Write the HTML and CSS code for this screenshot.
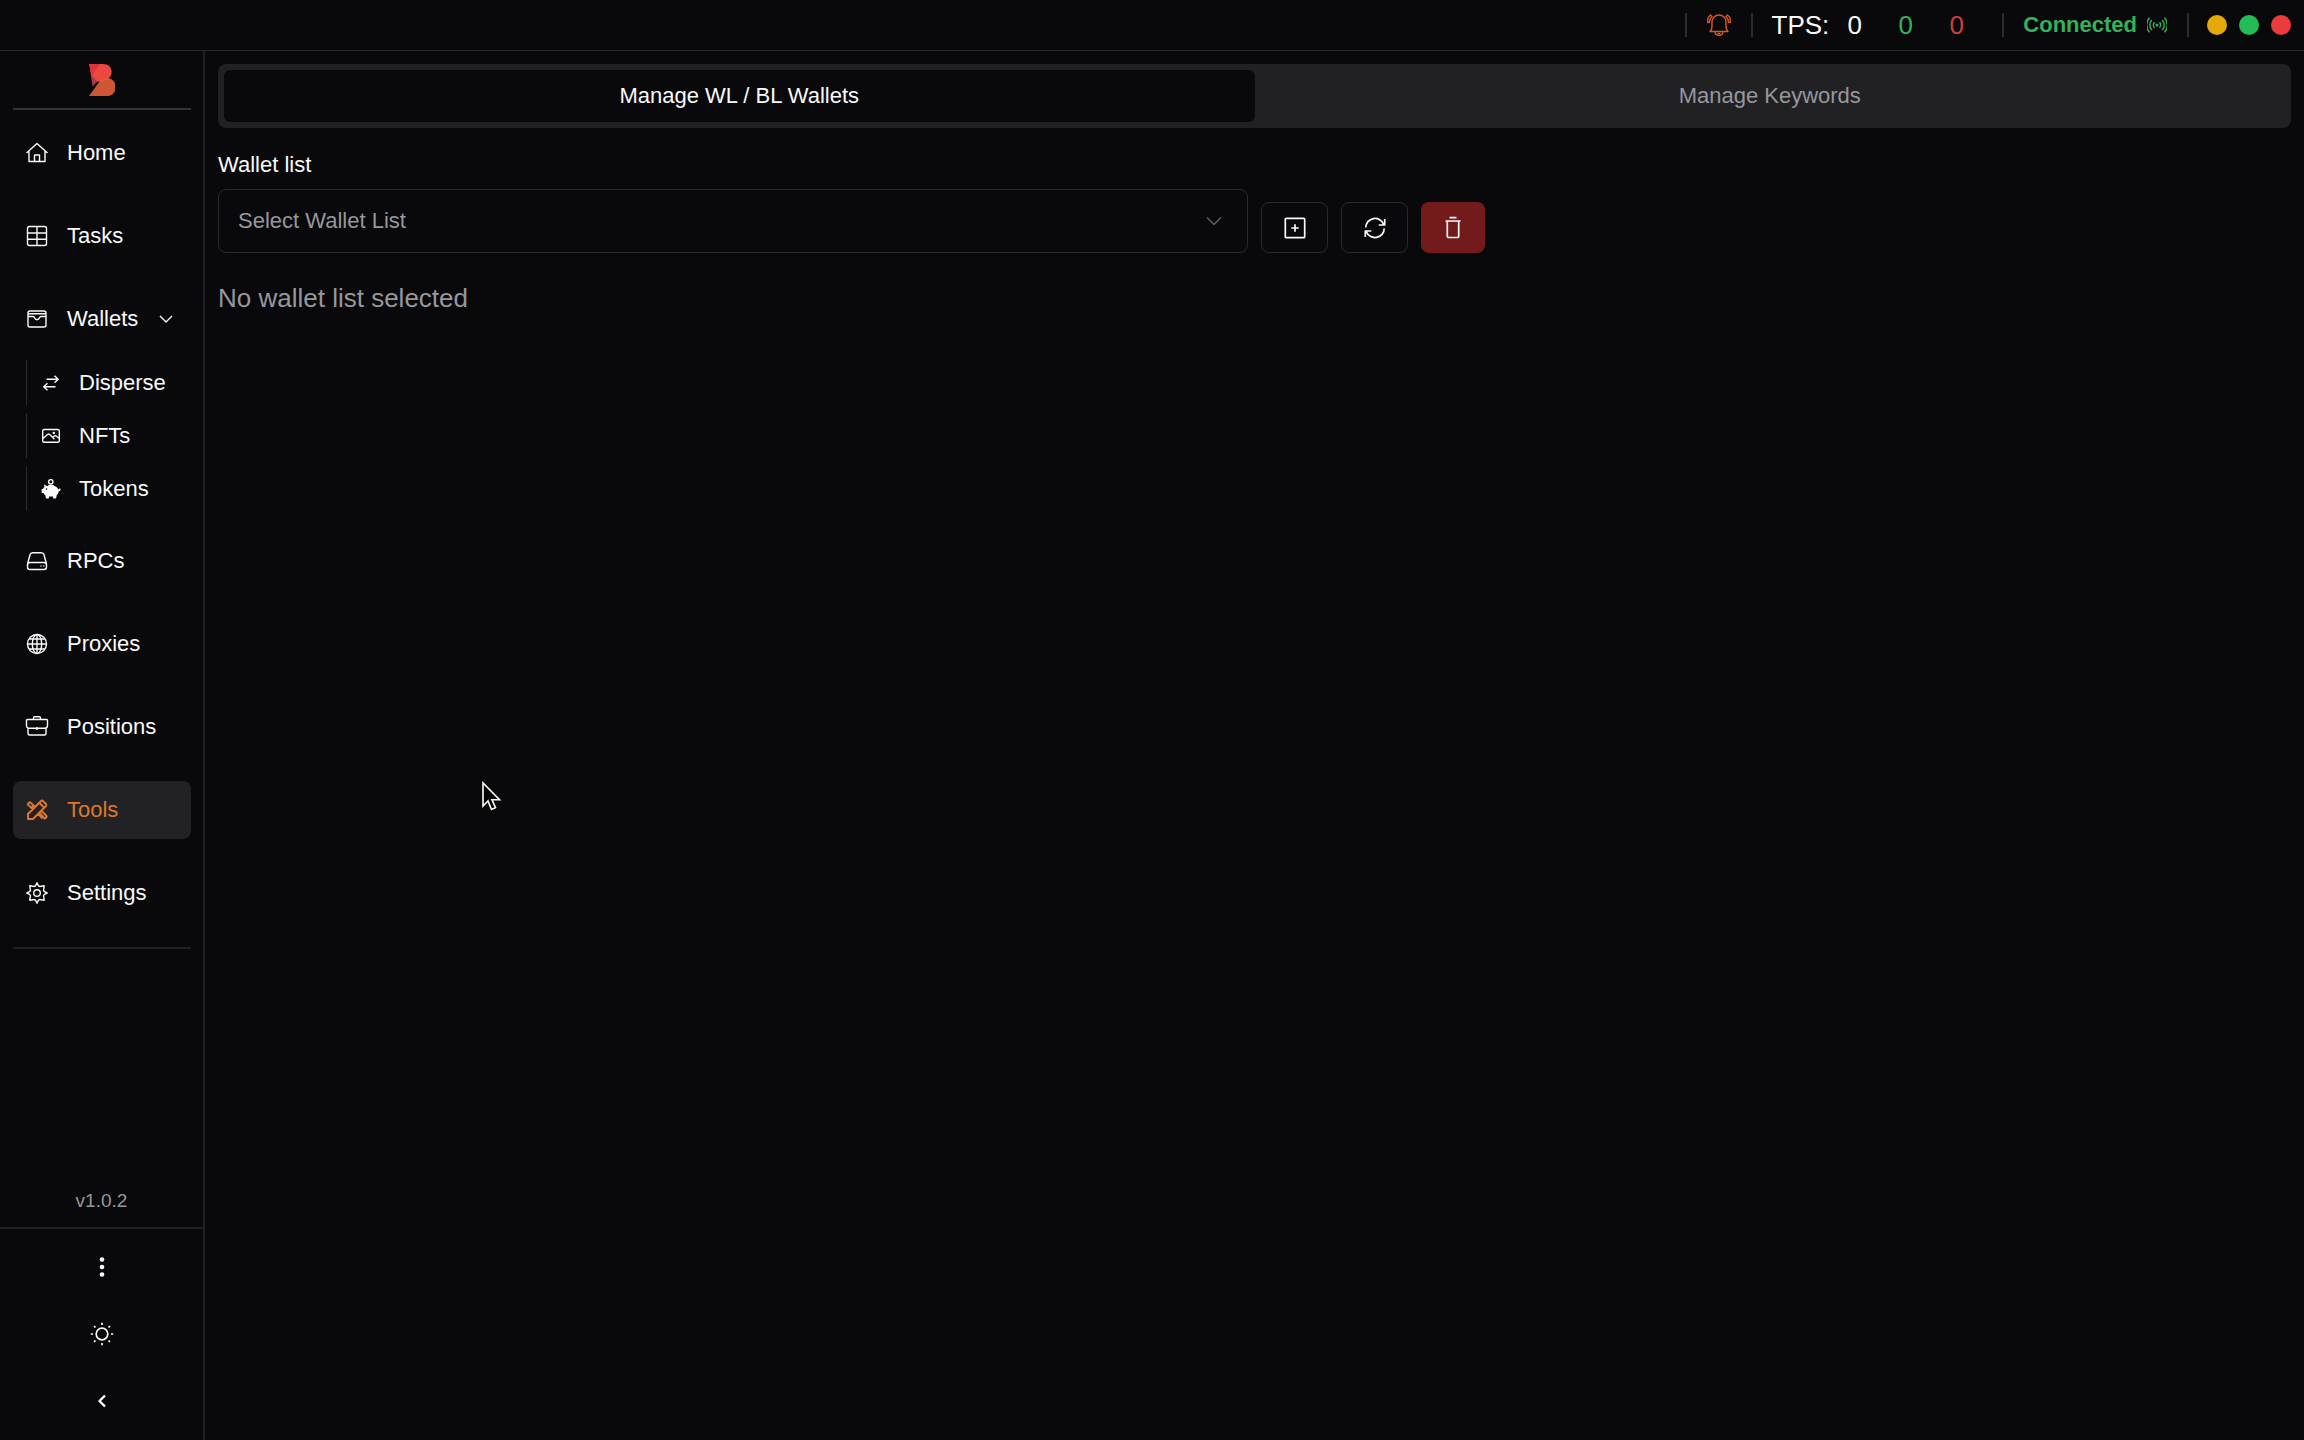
FILE: index.html
```html
<!DOCTYPE html>
<html lang="en">
<head>
<meta charset="utf-8">
<meta name="viewport" content="width=device-width, initial-scale=1">
<title>Tools</title>
<link rel="stylesheet" href="styles.css">
</head>
<body>
<header class="topbar">
  <div class="topbar-cell">
    <button class="icon-button alert" type="button" aria-label="Notifications">
      <svg class="icon" viewBox="0 0 24 24"><path d="M3 18.500c1.700-1.300 2-3.200 2-5.700V9a7 7 0 0 1 14 0v3.800c0 2.500.3 4.400 2 5.700z"/><path d="M8 18.500c.3 5.300 7.700 5.300 8 0M10.500 20.500h3M3.500 2C1.300 3.600.4 6 .5 9.500l2-.3c.1-2.500.9-4.300 2.500-5.700zM20.500 2c2.200 1.600 3.100 4 3 7.500l-2-.3c-.1-2.500-.9-4.300-2.500-5.700z"/></svg>
    </button>
  </div>
  <div class="topbar-cell tps">
    <span class="tps-label">TPS:</span>
    <span class="tps-value">0</span>
    <span class="tps-value good">0</span>
    <span class="tps-value bad">0</span>
  </div>
  <div class="topbar-cell connection">
    <span>Connected</span>
    <svg class="icon icon-small" viewBox="0 0 20 20"><circle cx="10" cy="10" r=".8"/><path d="M7.500 7.300a4.200 4.200 0 0 0 0 5.400M12.500 7.300a4.200 4.200 0 0 1 0 5.400M4.800 4.900a7.500 7.500 0 0 0 0 10.200M15.200 4.900a7.500 7.500 0 0 1 0 10.200M2.500 2.800a10.500 10.500 0 0 0 0 14.400M17.500 2.800a10.500 10.500 0 0 1 0 14.400"/></svg>
  </div>
  <div class="topbar-cell window-controls">
    <button class="dot dot-amber" type="button" aria-label="Minimize"></button>
    <button class="dot dot-green" type="button" aria-label="Maximize"></button>
    <button class="dot dot-red" type="button" aria-label="Close"></button>
  </div>
</header>

<div class="shell">
  <aside class="sidebar">
    <a class="logo" href="#" aria-label="Dashboard">
      <svg viewBox="0 0 80 96"><path fill="#a73b43" d="M3 18h28v26L11 68z"/><path fill="#ee4640" d="M0 0h42c16 0 26 9 26 24 0 11-6 18-14 21-12-1-20 3-28 9L9 36z"/><path fill="#dc3534" d="M0 0h32L12 30l-4 4z"/><path fill="#cc5732" d="M0 96l31-43c5-8 13-11 22-11 16 0 27 11 27 27S69 96 53 96z"/><path fill="#ef5a35" d="M27 54c8-10 21-13 33-11-5 7-20 8-33 11z"/></svg>
    </a>
    <nav class="nav">
      <a class="nav-item" href="#">
        <svg class="icon" viewBox="0 0 24 24"><path d="M1.500 12 12 2.500 22.500 12M4 10v10.500h16V10M9.500 20.500V14h5v6.500"/></svg>
        <span>Home</span>
      </a>
      <a class="nav-item" href="#">
        <svg class="icon" viewBox="0 0 24 24"><rect x="2.500" y="2.500" width="19" height="19" rx="2"/><path d="M2.500 9h19M2.500 15.200h19M12 2.500v19"/></svg>
        <span>Tasks</span>
      </a>
      <button class="nav-item" type="button" aria-expanded="true">
        <svg class="icon" viewBox="0 0 24 24"><rect x="3" y="4" width="18" height="16" rx="2"/><path d="M3 6.800h18M3 9.500h5.200c.8 0 1 .6 1.300 1.300.9 2.500 4.100 2.500 5 0 .3-.7.500-1.300 1.300-1.300H21"/></svg>
        <span>Wallets</span>
        <svg class="icon chevron" viewBox="0 0 16 16"><path d="m2 5 6 6 6-6"/></svg>
      </button>
      <ul class="subnav">
        <li><a class="subnav-item" href="#">
          <svg class="icon icon-small" viewBox="0 0 20 20"><path d="M5.500 6.200H17M13.500 2.700 17.300 6.200 13.500 9.700M14.500 13.700H3M6.500 10.200 2.700 13.700l3.800 3.500"/></svg>
          <span>Disperse</span>
        </a></li>
        <li><a class="subnav-item" href="#">
          <svg class="icon icon-small" viewBox="0 0 20 20"><rect x="1.700" y="3.500" width="16.600" height="12.800" rx="1.500"/><path d="m2 12.500 4.500-4c1-.8 1.800-.4 2.500.3l4.500 4.500M11.500 11.500 13 10.300c1-.8 1.800-.6 2.500 0l2.500 2"/><circle cx="12.800" cy="7" r=".6"/></svg>
          <span>NFTs</span>
        </a></li>
        <li><a class="subnav-item" href="#">
          <svg class="icon icon-small" viewBox="0 0 20 20"><circle cx="9.800" cy="2.800" r="2.200"/><path d="M7 7q3-1 6 0"/><path fill="currentColor" stroke="none" fill-rule="evenodd" d="M3 5.300 6 7.200c1-.4 2.300-.6 3.800-.6 3.700 0 6.700 1.500 7.700 3.900.9.100.8-1.100 1.300-1.300.8 0 1 .9.700 1.800-.3.800-.9 1.200-1.700 1.300-.1 1.600-.9 2.700-2 3.700L15 19.500h-2.700l-.6-1.900H8.300l-.6 1.900H5l-.7-3.300c-.8-.6-1.400-1.300-1.800-2.200H.6V10h1.300c.4-.9.900-1.600 1.600-2.100zM5.500 9.200a.8.800 0 1 0 0 1.600.8.800 0 0 0 0-1.600z"/></svg>
          <span>Tokens</span>
        </a></li>
      </ul>
      <a class="nav-item" href="#">
        <svg class="icon" viewBox="0 0 24 24"><path d="M2.500 15 5 5.700C5.400 4.200 6.400 3.700 7.700 3.700h8.600c1.300 0 2.300.5 2.700 2l2.500 9.300"/><rect x="2.500" y="13.500" width="19" height="7" rx="2.500"/><path d="M15.500 17h1M18.300 17h1"/></svg>
        <span>RPCs</span>
      </a>
      <a class="nav-item" href="#">
        <svg class="icon" viewBox="0 0 24 24"><circle cx="12" cy="12" r="9.500"/><ellipse cx="12" cy="12" rx="4.700" ry="9.500"/><path d="M2.500 12h19M12 2.500v19M4.300 7h15.400M4.300 17h15.400"/></svg>
        <span>Proxies</span>
      </a>
      <a class="nav-item" href="#">
        <svg class="icon" viewBox="0 0 24 24"><path d="M2.300 4.500h19.400c.6 0 .8.300.8.800v5.200c0 1.700-1 2.800-2.700 2.800H4.200c-1.700 0-2.700-1.100-2.700-2.800V5.300c0-.5.200-.8.800-.8zM3 13v5.500c0 1 .6 1.500 1.500 1.500h15c.9 0 1.500-.5 1.500-1.500V13M8.500 4.500V3c0-.8.400-1.200 1.200-1.200h4.600c.8 0 1.200.4 1.200 1.200v1.500M12 12v3"/></svg>
        <span>Positions</span>
      </a>
      <a class="nav-item active" href="#" aria-current="page">
        <svg class="icon" viewBox="0 0 24 24"><path d="M3 21v-5L15.800 3.200c.7-.7 1.700-.7 2.400 0l2.600 2.600c.7.700.7 1.700 0 2.400L8 21zM10 9 5.600 4.600c-.5-.5-1-.5-1.500 0L3.300 5.400c-.5.500-.5 1 0 1.500L8 11.500M6.500 9.500l2-2M15 15.500l4 4.500c.5.500 1 .5 1.500 0l.8-.8c.5-.5.500-1 0-1.500L16.500 13M12.500 15l5 5.500M14.500 5l4.500 4.500"/></svg>
        <span>Tools</span>
      </a>
      <a class="nav-item" href="#">
        <svg class="icon" viewBox="0 0 24 24"><circle cx="12" cy="12" r="3.300"/><path d="M12 1.800 13.300 4.500C14 5.400 15.200 5.700 16.200 5.200L19.200 4.800 18.800 7.800C18.300 8.800 18.600 10 19.500 10.700L22.200 12 19.500 13.300C18.600 14 18.300 15.200 18.800 16.200L19.200 19.200 16.200 18.800C15.200 18.300 14 18.600 13.300 19.500L12 22.200 10.700 19.500C10 18.600 8.800 18.300 7.800 18.800L4.800 19.200 5.200 16.200C5.700 15.200 5.400 14 4.500 13.300L1.800 12 4.500 10.700C5.400 10 5.700 8.800 5.200 7.800L4.800 4.800 7.800 5.200C8.800 5.700 10 5.400 10.700 4.500z"/></svg>
        <span>Settings</span>
      </a>
    </nav>
    <div class="sidebar-foot">
      <p class="version">v1.0.2</p>
      <div class="foot-actions">
        <button class="icon-button" type="button" aria-label="More">
          <svg class="icon" viewBox="0 0 24 24"><g fill="currentColor" stroke="none"><circle cx="12" cy="4.500" r="2.300"/><circle cx="12" cy="12" r="2.300"/><circle cx="12" cy="19.500" r="2.300"/></g></svg>
        </button>
        <button class="icon-button" type="button" aria-label="Toggle theme">
          <svg class="icon icon-bold" viewBox="0 0 24 24"><circle cx="12" cy="12" r="5.800"/><path d="M12 .8v2.200M12 21v2.200M.8 12H3M21 12h2.200M4 4l1.500 1.500M18.500 18.500 20 20M4 20l1.500-1.500M18.500 5.500 20 4"/></svg>
        </button>
        <button class="icon-button" type="button" aria-label="Collapse sidebar">
          <svg class="icon icon-heavy" viewBox="0 0 24 24"><path d="m15 6.500-5.500 5.500 5.500 5.500"/></svg>
        </button>
      </div>
    </div>
  </aside>

  <main class="content">
    <div class="tabs" role="tablist">
      <button class="tab selected" type="button" role="tab" aria-selected="true">Manage WL / BL Wallets</button>
      <button class="tab" type="button" role="tab" aria-selected="false">Manage Keywords</button>
    </div>
    <form class="picker">
      <div class="field">
        <label for="wallet-list">Wallet list</label>
        <div class="select-wrap">
          <select id="wallet-list"><option>Select Wallet List</option></select>
          <svg class="icon icon-bold select-arrow" viewBox="0 0 20 20"><path d="m3 6.500 7 7 7-7"/></svg>
        </div>
      </div>
      <div class="actions">
        <button class="action" type="button" aria-label="Add wallet list">
          <svg class="icon icon-bold" viewBox="0 0 24 24"><rect x="2.300" y="2.300" width="19.400" height="19.400" rx="1"/><path d="M12 8.300v7.400M8.300 12h7.400"/></svg>
        </button>
        <button class="action" type="button" aria-label="Refresh">
          <svg class="icon icon-bold" viewBox="0 0 24 24"><path d="M2.800 11.500A9.200 9 0 0 1 20.700 8.500M21.700 3v6h-6M21.200 12.500A9.200 9 0 0 1 3.300 15.500M2.300 21v-6h6"/></svg>
        </button>
        <button class="action danger" type="button" aria-label="Delete">
          <svg class="icon icon-bold" viewBox="0 0 24 24"><path d="M4.500 5h15M8.500 1.700h7M6.300 5v15.300c0 .8.400 1.200 1.200 1.200h9c.8 0 1.200-.4 1.200-1.200V5"/></svg>
        </button>
      </div>
    </form>
    <p class="empty">No wallet list selected</p>
  </main>
</div>

<svg class="pointer" viewBox="0 0 20 30" aria-hidden="true"><path d="M1 2v23l5-5 3.500 8.500 4-1.800-3.500-8H17.500z"/></svg>
</body>
</html>
```

FILE: styles.css
```css
:root {
  --bg: #09090b;
  --line: #202022;
  --surface: #212123;
  --text: #fafafa;
  --muted: #97979e;
  --green: #32b35b;
  --red: #d23c3a;
  --orange: #dd7631;
}

* { box-sizing: border-box; }

body {
  margin: 0;
  min-height: 100vh;
  display: flex;
  flex-direction: column;
  background: var(--bg);
  color: var(--text);
  font: 22px/28px "Liberation Sans", Arial, sans-serif;
}

button, select {
  margin: 0;
  padding: 0;
  border: 0;
  background: none;
  color: inherit;
  font: inherit;
}

p, ul { margin: 0; padding: 0; }
a { color: inherit; text-decoration: none; }

.icon {
  flex: none;
  display: block;
  width: 24px;
  height: 24px;
  fill: none;
  stroke: currentColor;
  stroke-width: 1.4;
  stroke-linejoin: round;
}
.icon-small { width: 20px; height: 20px; }
.icon-bold { stroke-width: 1.7; }
.icon-heavy { stroke-width: 2.4; }

.icon-button {
  display: grid;
  place-items: center;
  height: 42px;
}

/* Top bar */
.topbar {
  display: flex;
  align-items: center;
  justify-content: flex-end;
  height: 51px;
  padding-right: 13px;
  border-bottom: 1px solid #27272a;
}
.topbar-cell {
  display: flex;
  align-items: center;
  height: 24px;
  padding: 0 20px;
  border-left: 2px solid #2c2c2f;
}
.alert { color: #d9562b; }
.tps {
  padding: 0 20px 0 19px;
  font-size: 26px;
}
.tps-value {
  width: 51px;
  text-align: center;
}
.good, .connection { color: var(--green); }
.bad { color: var(--red); }
.connection {
  gap: 10px;
  padding-left: 19px;
  font-weight: bold;
}
.window-controls {
  gap: 12px;
  padding: 0 0 0 18px;
}
.dot {
  width: 20px;
  height: 20px;
  border-radius: 50%;
}
.dot-amber { background: #e6a807; }
.dot-green { background: #22bd55; }
.dot-red { background: #eb3c3b; }

.shell {
  flex: 1;
  display: flex;
}

/* Sidebar */
.sidebar {
  flex: none;
  display: flex;
  flex-direction: column;
  width: 205px;
  border-right: 2px solid var(--line);
}
.logo {
  margin: 0 12px 0 13px;
  padding: 13px 0 12px;
  border-bottom: 2px solid #333337;
}
.logo svg {
  display: block;
  height: 32px;
  margin: 0 auto;
}
.nav {
  display: flex;
  flex-direction: column;
  gap: 25px;
  margin: 0 12px 0 13px;
  padding: 14px 0 25px;
  border-bottom: 2px solid var(--line);
}
.nav-item {
  display: flex;
  align-items: center;
  gap: 18px;
  height: 58px;
  padding: 0 12px;
  border-radius: 8px;
}
.nav-item.active {
  background: #222225;
  color: var(--orange);
}
.nav-item.active .icon { stroke-width: 2; }
.chevron {
  width: 16px;
  height: 16px;
  margin-left: 2px;
}
.subnav {
  display: grid;
  gap: 8px;
  margin: -13px 0 -4px 13px;
  list-style: none;
}
.subnav-item {
  display: flex;
  align-items: center;
  gap: 18px;
  height: 45px;
  padding-left: 14px;
  border-left: 1px solid #2a2a2d;
}
.sidebar-foot { margin-top: auto; }
.version {
  padding-bottom: 12px;
  color: var(--muted);
  font-size: 19px;
  text-align: center;
}
.foot-actions {
  display: grid;
  gap: 25px;
  padding: 17px 0 18px;
  border-top: 2px solid var(--line);
}

/* Content */
.content {
  flex: 1;
  padding: 13px;
}
.tabs {
  display: grid;
  grid-template-columns: 1fr 1fr;
  padding: 6px;
  border-radius: 8px;
  background: var(--surface);
}
.tab {
  height: 52px;
  border-radius: 6px;
  color: var(--muted);
}
.tab.selected {
  background: var(--bg);
  color: var(--text);
}
.picker {
  display: grid;
  grid-template-columns: 1fr 1fr;
  gap: 13px;
  margin-top: 23px;
}
.field {
  display: grid;
  gap: 10px;
}
.select-wrap {
  position: relative;
}
.select-wrap select {
  display: block;
  width: 100%;
  height: 64px;
  padding: 0 19px;
  border: 1px solid #29292c;
  border-radius: 8px;
  appearance: none;
  color: var(--muted);
}
.select-arrow {
  position: absolute;
  top: 22px;
  right: 24px;
  width: 20px;
  height: 20px;
  color: #5a5a5e;
  pointer-events: none;
}
.actions {
  display: flex;
  align-items: flex-end;
  gap: 13px;
}
.action {
  display: grid;
  place-items: center;
  width: 67px;
  height: 51px;
  border: 1px solid #29292c;
  border-radius: 8px;
}
.action.danger {
  width: 64px;
  border: 0;
  background: #731b1a;
}
.empty {
  margin-top: 31px;
  color: var(--muted);
  font-size: 26px;
}

/* Pointer drawn over the page */
.pointer {
  position: absolute;
  left: 482px;
  top: 781px;
  width: 20px;
  height: 30px;
  fill: #000;
  stroke: #fff;
  stroke-width: 1.6;
  pointer-events: none;
}
```
